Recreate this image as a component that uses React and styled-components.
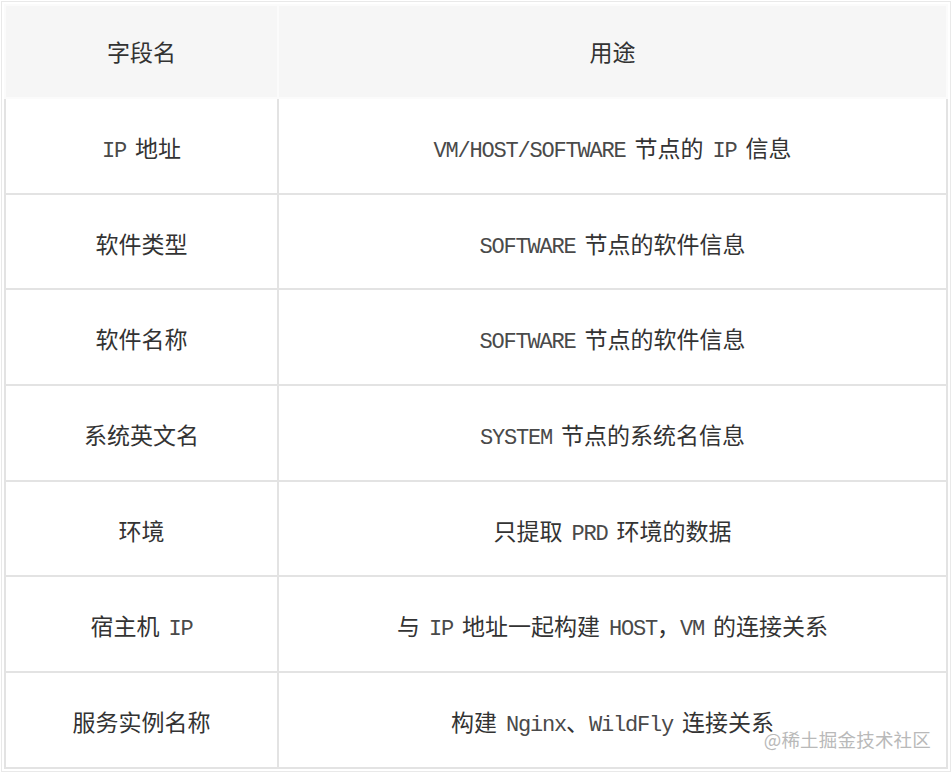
import React from 'react';
import styled, { createGlobalStyle } from 'styled-components';

const Global = createGlobalStyle`
  html, body {
    margin: 0;
    padding: 0;
    background: #ffffff;
  }
  body {
    font-family: "Noto Sans CJK SC", sans-serif;
    color: #333333;
  }
`;

const Frame = styled.div`
  position: relative;
  width: 944px;
  margin: 1px 0 0 1px;
  padding: 2px;
  border: 1px solid #e9e9e9;
`;

const Table = styled.table`
  width: 100%;
  border-collapse: collapse;
  table-layout: fixed;
`;

const HeadCell = styled.th`
  height: 89px;
  padding: 0 0 2px;
  background: #f6f6f6;
  border: 2px solid #fbfbfb;
  font-weight: 400;
  font-size: 23px;
  text-align: center;
  vertical-align: middle;
  color: #333333;
  width: ${(p) => (p.$first ? '271px' : 'auto')};
`;

const Row = styled.tr`
  height: 95.7px;
`;

const Cell = styled.td`
  padding: 2px 0 0;
  border: 2px solid #e3e3e3;
  font-size: 23px;
  text-align: center;
  vertical-align: middle;
  white-space: nowrap;
`;

const Latin = styled.span`
  font-family: "Liberation Mono", "Noto Sans CJK SC", monospace;
  font-size: 22px;
  letter-spacing: -1.2px;
  word-spacing: -3px;
  white-space: pre;
  color: #4a4a4a;
`;

const Watermark = styled.div`
  position: absolute;
  right: 19px;
  bottom: 19px;
  font-size: 18.5px;
  color: #b9b9b9;
  letter-spacing: 0.2px;
`;

const rows = [
  ['IP 地址', 'VM/HOST/SOFTWARE 节点的 IP 信息'],
  ['软件类型', 'SOFTWARE 节点的软件信息'],
  ['软件名称', 'SOFTWARE 节点的软件信息'],
  ['系统英文名', 'SYSTEM 节点的系统名信息'],
  ['环境', '只提取 PRD 环境的数据'],
  ['宿主机 IP', '与 IP 地址一起构建 HOST，VM 的连接关系'],
  ['服务实例名称', '构建 Nginx、WildFly 连接关系'],
];

// latin runs get the narrow mono face, cjk stays in Noto
function Mixed({ text }) {
  const parts = text.split(/([\x20-\x7E]+)/).filter(Boolean);
  return parts.map((part, i) =>
    /^[\x20-\x7E]+$/.test(part) ? <Latin key={i}>{part}</Latin> : <span key={i}>{part}</span>
  );
}

export default function App() {
  return (
    <>
      <Global />
      <Frame>
        <Table>
          <thead>
            <tr>
              <HeadCell $first>字段名</HeadCell>
              <HeadCell>用途</HeadCell>
            </tr>
          </thead>
          <tbody>
            {rows.map(([name, use]) => (
              <Row key={name}>
                <Cell><Mixed text={name} /></Cell>
                <Cell><Mixed text={use} /></Cell>
              </Row>
            ))}
          </tbody>
        </Table>
        <Watermark>@稀土掘金技术社区</Watermark>
      </Frame>
    </>
  );
}
